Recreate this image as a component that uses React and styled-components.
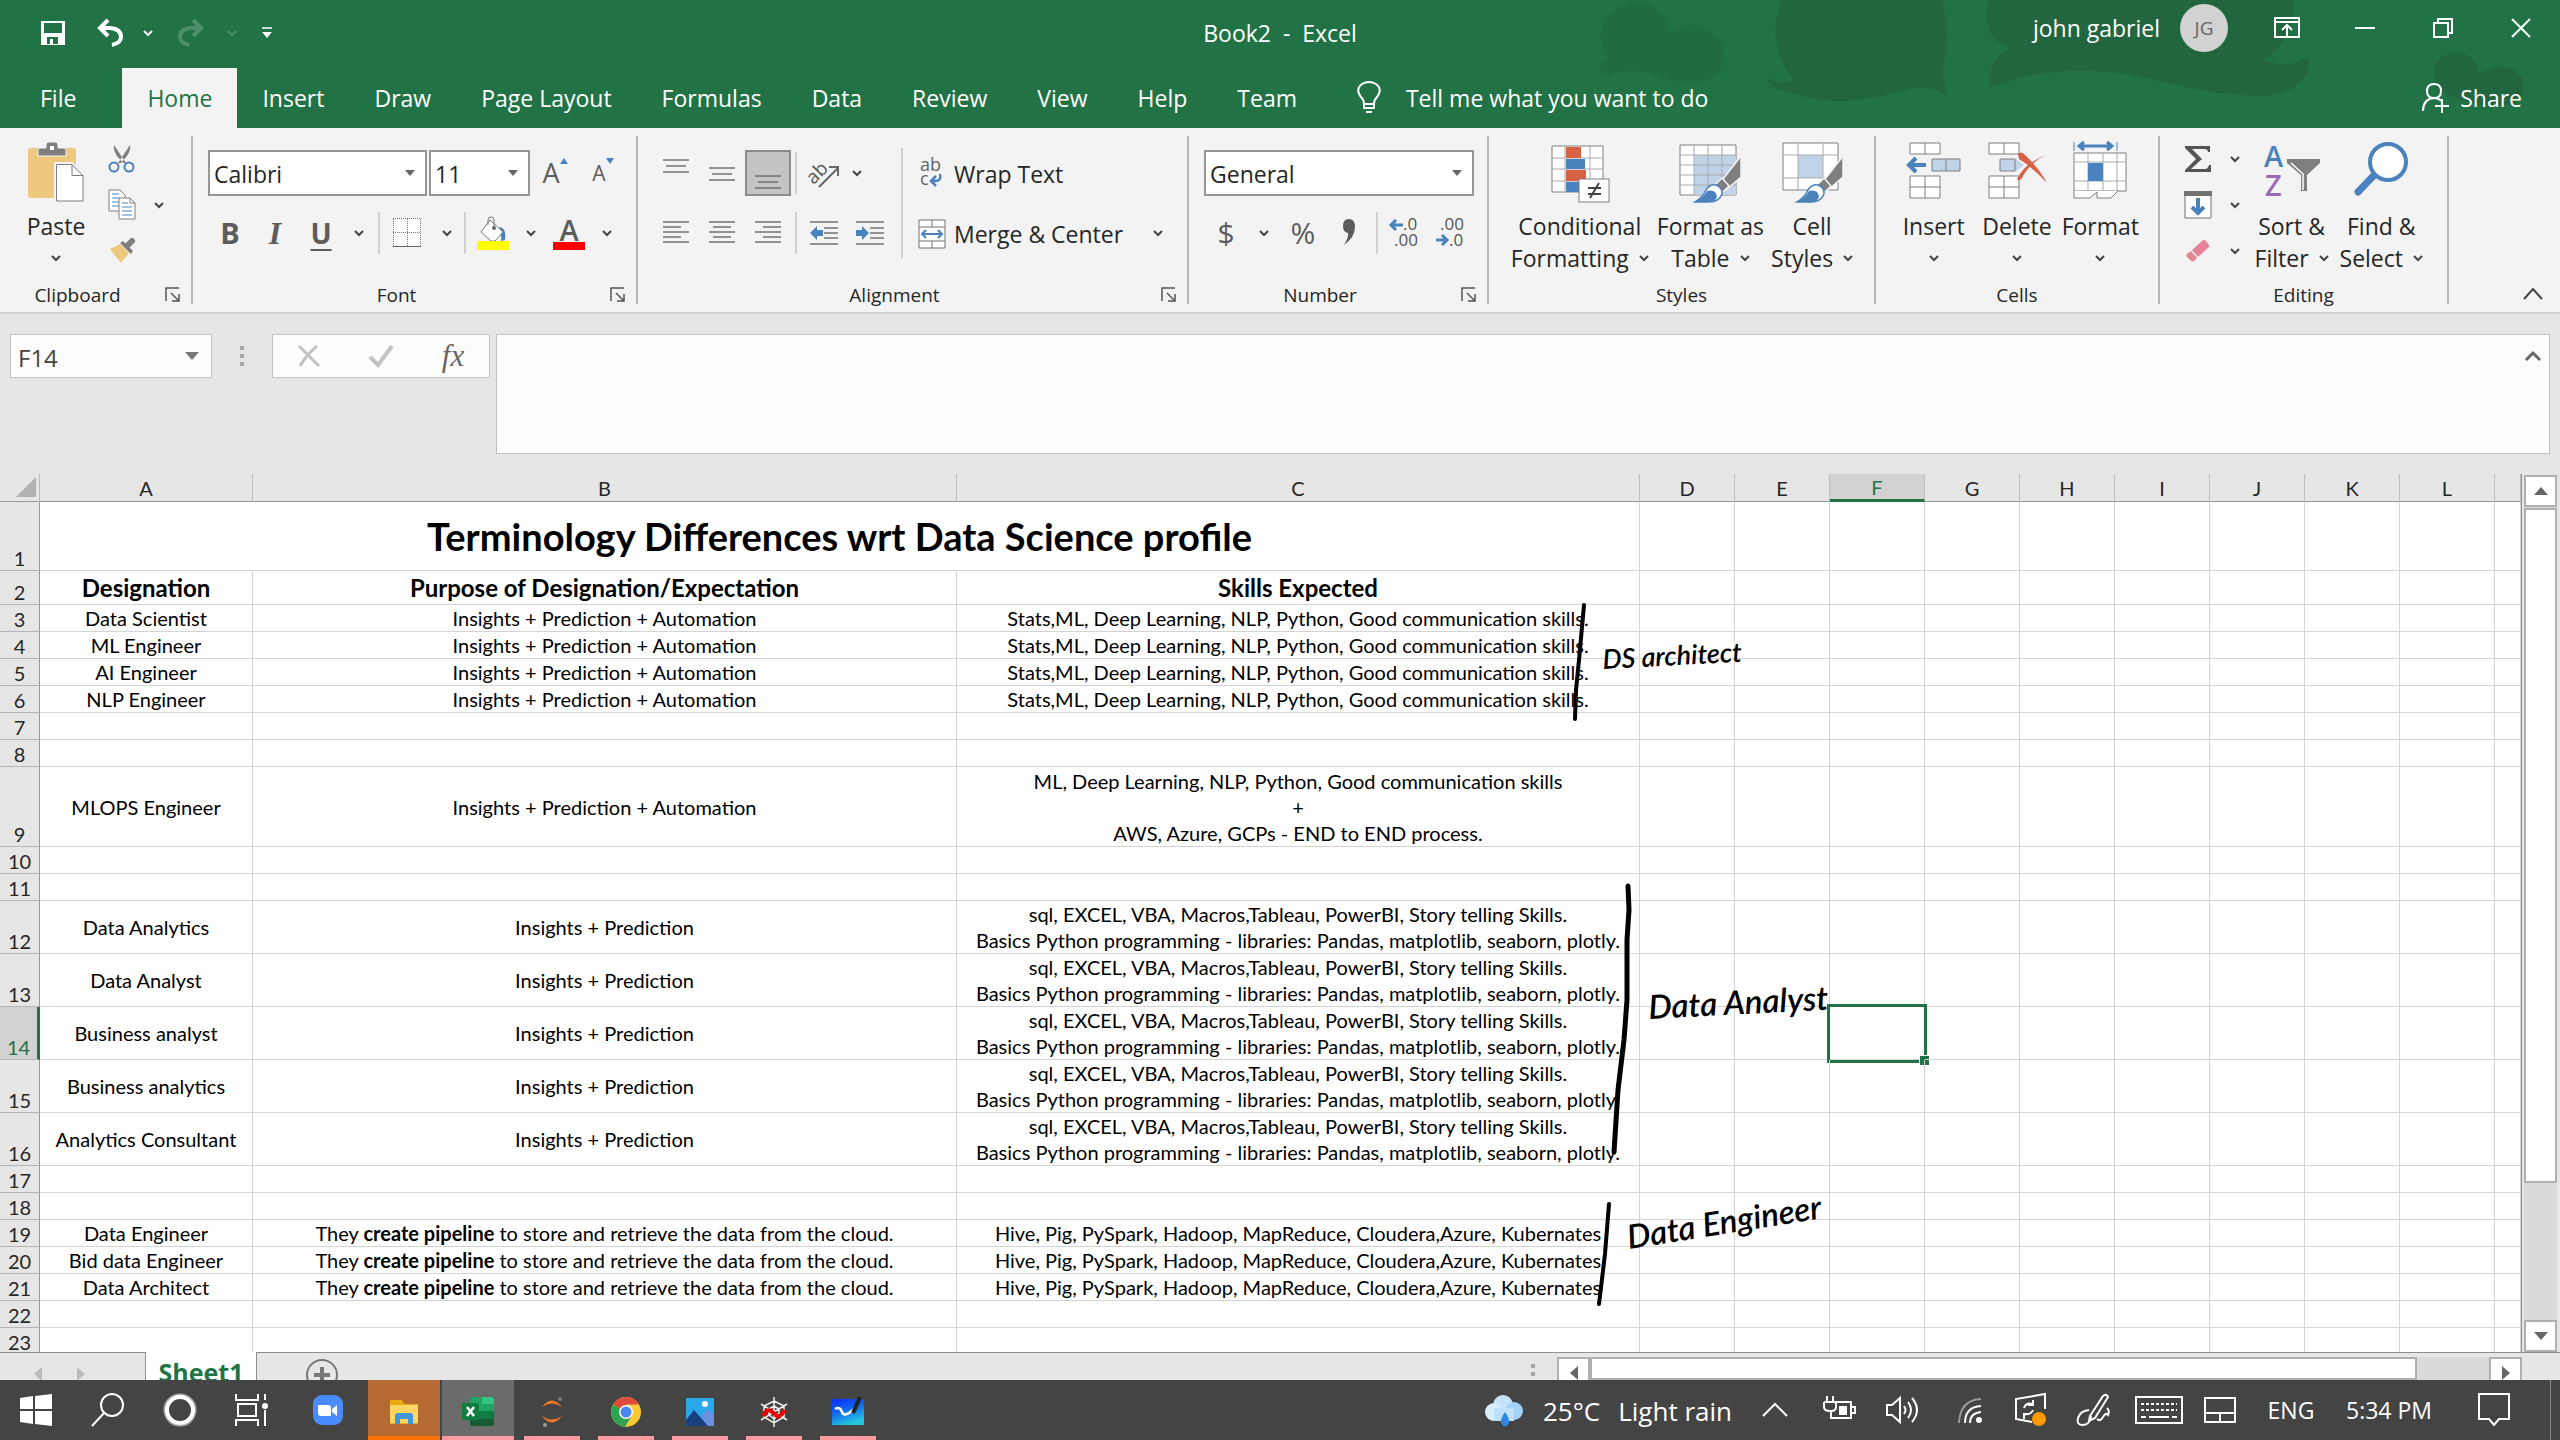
import React from "react";
import styled, { createGlobalStyle, css } from "styled-components";

const UI = `"Open Sans", "Noto Sans", sans-serif`;
const CELL = `Lato, "Open Sans", sans-serif`;
const GREEN = "#217346";
const GREY = "#7f7f7f";
const BLUE = "#4a82bd";

const Global = createGlobalStyle`
  *, *::before, *::after { box-sizing: border-box; }
  body { margin: 0; background: #e6e6e6; font-family: ${UI}; color: #262626; }
  button, input, select, textarea { font: inherit; color: inherit; margin: 0; padding: 0; border: 0; background: none; border-radius: 0; }
  button { display: inline-flex; align-items: center; justify-content: center; white-space: nowrap; }
  svg { display: block; flex: none; overflow: visible; }
`;

const Window = styled.div`
  display: flex;
  flex-direction: column;
  height: 100vh;
  overflow: hidden;
  font-size: 23px;
`;

/* ---------- title and tabs ---------- */
const Header = styled.header`
  position: relative;
  flex: none;
  background: ${GREEN};
  color: #fff;
`;
const Doodles = styled.svg`
  position: absolute;
  top: 0;
  right: 0;
`;
const TitleBar = styled.div`
  position: relative;
  display: grid;
  grid-template-columns: 1fr auto 1fr;
  align-items: center;
  height: 68px;
  padding-bottom: 2px;
`;
const QuickAccess = styled.div`
  display: flex;
  align-items: center;
  padding-left: 32px;
`;
const QuickButton = styled.button`
  width: ${(p) => p.$w}px;
  height: 40px;
  opacity: ${(p) => (p.$dim ? 0.2 : 1)};
`;
const DocTitle = styled.h1`
  margin: 0;
  font-size: 23px;
  font-weight: 400;
  white-space: pre;
`;
const TitleRight = styled.div`
  display: flex;
  justify-content: flex-end;
  align-items: center;
  align-self: start;
  height: 56px;
`;
const Avatar = styled.span`
  display: grid;
  place-items: center;
  width: 48px;
  height: 48px;
  margin: 0 20px;
  border-radius: 50%;
  background: #d2d2d2;
  color: #666;
  font-size: 19px;
`;
const CaptionButton = styled.button`
  width: 78px;
  height: 56px;
`;
const TabBar = styled.nav`
  position: relative;
  display: flex;
  height: 60px;
`;
const Tab = styled.button`
  height: 60px;
  padding: 0 ${(p) => (p.$file ? 46 : 25)}px 0 ${(p) => (p.$file ? 40 : 25)}px;
  background: ${(p) => (p.$active ? "#f3f3f3" : "transparent")};
  color: ${(p) => (p.$active ? GREEN : "#fff")};
`;
const TellMe = styled.button`
  gap: 24px;
  margin-left: 34px;
`;
const Share = styled.button`
  gap: 8px;
  margin-left: auto;
  padding-right: 38px;
`;

/* ---------- ribbon ---------- */
const Ribbon = styled.div`
  display: flex;
  flex: none;
  height: 186px;
  padding: 8px 0;
  background: #f3f3f3;
  border-bottom: 2px solid #d0d0d0;
`;
const Group = styled.section`
  display: flex;
  flex-direction: column;
  flex: none;
  width: ${(p) => p.$w}px;
  border-right: 2px solid #b5b5b5;
`;
const GroupBody = styled.div`
  display: flex;
  flex: 1;
  padding: 0 ${(p) => p.$pad || 0}px;
`;
const GroupFoot = styled.div`
  display: flex;
  align-items: center;
  height: 26px;
  padding-top: 8px;
  font-size: 19px;
  line-height: 18px;
  text-align: center;
`;
const GroupName = styled.span`
  flex: 1;
`;
const Launcher = styled.button`
  width: 36px;
  height: 18px;
`;
const Big = styled.button`
  flex-direction: column;
  justify-content: flex-start;
  width: ${(p) => p.$w}px;
  height: 138px;
  padding-top: 6px;
  line-height: 32px;
`;
const BigLine = styled.span`
  display: flex;
  align-items: center;
  justify-content: center;
  gap: 10px;
  height: 32px;
`;
const SmallColumn = styled.div`
  display: flex;
  flex-direction: column;
  width: ${(p) => p.$w}px;
`;
const Small = styled.button`
  gap: 18px;
  justify-content: flex-start;
  height: 46px;
`;
const Rows = styled.div`
  display: flex;
  flex-direction: column;
  gap: 14px;
  flex: ${(p) => (p.$grow ? 1 : "none")};
  padding-top: 14px;
`;
const Row = styled.div`
  display: flex;
  align-items: center;
  gap: ${(p) => p.$gap || 0}px;
  height: 46px;
`;
const Tool = styled.button`
  width: ${(p) => p.$w || 46}px;
  height: 46px;
  color: #5c5c5c;
  ${(p) => p.$on && css`background: #c5c5c5; border: 2px solid #8a8a8a;`}
`;
const Glyph = styled.span`
  font-size: ${(p) => p.$size || 30}px;
  line-height: 36px;
  font-weight: ${(p) => (p.$bold ? 700 : 400)};
  font-style: ${(p) => (p.$italic ? "italic" : "normal")};
  font-family: ${(p) => (p.$serif ? `"Liberation Serif", serif` : UI)};
  text-decoration: ${(p) => (p.$under ? "underline" : "none")};
  text-decoration-thickness: 2px;
  text-underline-offset: 5px;
`;
const ColorStack = styled.span`
  display: flex;
  flex-direction: column;
  align-items: center;
  border-bottom: 8px solid ${(p) => p.$c};
  width: 32px;
  height: 34px;
  font-size: 29px;
  font-weight: 600;
  line-height: 28px;
`;
const Sep = styled.span`
  flex: none;
  width: 2px;
  height: ${(p) => p.$h || 42}px;
  margin: ${(p) => p.$m || "0"};
  background: #d0d0d0;
`;
const ComboBox = styled.span`
  display: grid;
  align-items: center;
  flex: ${(p) => (p.$w ? "none" : 1)};
  width: ${(p) => (p.$w ? p.$w + "px" : "auto")};
  height: 46px;
  background: #fff;
  border: 2px solid #969696;
  & > * { grid-area: 1 / 1; }
  & > svg { justify-self: end; margin-right: 10px; pointer-events: none; }
`;
const ComboSelect = styled.select`
  appearance: none;
  width: 100%;
  height: 100%;
  padding: 2px 0 0 4px;
`;
const TextTool = styled.button`
  gap: 8px;
  height: 46px;
  padding-top: 2px;
`;
const Collapse = styled.button`
  align-self: flex-end;
  margin-left: auto;
  padding: 0 16px;
  height: 24px;
`;

/* ---------- formula bar ---------- */
const FormulaBar = styled.div`
  display: flex;
  align-items: flex-start;
  flex: none;
  height: 160px;
  padding: 20px 10px;
`;
const Box = styled.div`
  display: flex;
  align-items: center;
  flex: none;
  width: ${(p) => p.$w}px;
  height: 44px;
  background: #fdfdfd;
  border: 1px solid #c0c0c0;
`;
const NameInput = styled.input`
  flex: 1;
  min-width: 0;
  height: 42px;
  padding: 2px 0 0 7px;
  color: #444;
  font-size: 24px;
`;
const NameArrow = styled.button`
  width: 38px;
  height: 42px;
`;
const Dots = styled.span`
  display: flex;
  flex-direction: column;
  gap: 4px;
  padding: ${(p) => p.$p};
  &::before, &::after { content: ""; width: 4px; height: 4px; background: #a6a6a6; }
  & > i { width: 4px; height: 4px; background: #a6a6a6; }
`;
const FxButton = styled.button`
  flex: 1;
  height: 42px;
  color: #666;
`;
const FormulaBox = styled.div`
  display: flex;
  align-items: flex-start;
  flex: 1;
  height: 120px;
  margin-left: 6px;
  background: #fdfdfd;
  border: 1px solid #c0c0c0;
`;
const FormulaText = styled.textarea`
  flex: 1;
  height: 118px;
  resize: none;
`;
const Expand = styled.button`
  width: 32px;
  height: 42px;
`;

/* ---------- sheet ---------- */
const SheetArea = styled.main`
  display: flex;
  flex: 1;
  min-height: 0;
`;
const Canvas = styled.div`
  position: relative;
  flex: 1;
  min-width: 0;
  overflow: hidden;
  background: #fff;
  border-right: 1px solid #8f8f8f;
`;
const Grid = styled.table`
  width: 100%;
  table-layout: fixed;
  border-collapse: separate;
  border-spacing: 0;
  font-family: ${CELL};
  font-size: 20px;
  line-height: 26px;
  color: #000;
`;
const ColHead = styled.th`
  height: 28px;
  padding: 0;
  font-weight: 400;
  font-size: 20px;
  line-height: 24px;
  background: ${(p) => (p.$on ? "#d2d2d2" : "#e6e6e6")};
  color: ${(p) => (p.$on ? GREEN : "#262626")};
  border-right: 1px solid #bdbdbd;
  border-bottom: ${(p) => (p.$on ? `3px solid ${GREEN}` : "1px solid #999")};
`;
const CornerHead = styled(ColHead)`
  & > svg { margin: 0 3px 2px auto; }
`;
const RowHead = styled.th`
  padding: 0;
  font-weight: 400;
  font-size: 20px;
  line-height: 24px;
  vertical-align: bottom;
  background: ${(p) => (p.$on ? "#d2d2d2" : "#e6e6e6")};
  color: ${(p) => (p.$on ? GREEN : "#262626")};
  border-right: ${(p) => (p.$on ? `3px solid ${GREEN}` : "1px solid #999")};
  border-bottom: 1px solid #b5b5b5;
`;
const SheetRow = styled.tr`
  height: ${(p) => p.$h}px;
`;
const Cell = styled.td`
  position: relative;
  padding: 0;
  text-align: center;
  vertical-align: middle;
  white-space: pre;
  border-right: 1px solid #d4d4d4;
  border-bottom: 1px solid #d4d4d4;
  font-size: ${(p) => (p.$kind === "title" ? 38 : p.$kind === "head" ? 24 : 20)}px;
  font-weight: ${(p) => (p.$kind ? 700 : 400)};
`;
const Selection = styled.span`
  position: absolute;
  inset: -3px -3px -4px -3px;
  border: 3px solid ${GREEN};
  &::after {
    content: "";
    position: absolute;
    right: -5px;
    bottom: -5px;
    width: 10px;
    height: 10px;
    background: ${GREEN};
    border: solid #fff;
    border-width: 1px 0 0 1px;
  }
`;
const Ink = styled.svg`
  position: absolute;
  top: 0;
  left: 0;
  pointer-events: none;
  font-family: ${CELL};
  font-style: italic;
  font-weight: 600;
`;
const VScroll = styled.div`
  display: flex;
  flex-direction: column;
  width: 38px;
  padding: 1px 3px 0 2px;
`;
const ScrollButton = styled.button`
  flex: none;
  width: ${(p) => p.$w || 33}px;
  height: 32px;
  background: #fff;
  border: 2px solid #b0b0b0;
`;
const Track = styled.div`
  display: flex;
  flex-direction: ${(p) => (p.$row ? "row" : "column")};
  flex: 1;
  background: #dadada;
`;
const Thumb = styled.div`
  flex: 0 0 ${(p) => p.$len};
  margin: ${(p) => p.$m || "0"};
  background: #fff;
  border: 2px solid #b0b0b0;
`;
const SheetTabs = styled.div`
  display: flex;
  flex: none;
  height: 28px;
  overflow: hidden;
  align-items: flex-start;
  background: linear-gradient(#8f8f8f 1px, #e6e6e6 1px);
`;
const TabNav = styled.div`
  display: flex;
  gap: 35px;
  width: 145px;
  height: 28px;
  padding: 14px 0 0 34px;
`;
const NavButton = styled.button`
  height: 16px;
`;
const SheetTab = styled.button`
  width: 112px;
  height: 40px;
  background: #fff;
  border: solid #8f8f8f;
  border-width: 0 1px;
  color: ${GREEN};
  font-size: 25px;
  font-weight: 700;
`;
const TabFill = styled.div`
  flex: 1;
  height: 28px;
  padding: 6px 0 0 48px;
`;
const HScroll = styled.div`
  display: flex;
  width: 38%;
  max-width: 965px;
  height: 28px;
  padding-top: 5px;
  margin-right: 38px;
`;

/* ---------- taskbar ---------- */
const Taskbar = styled.footer`
  display: flex;
  align-items: center;
  flex: none;
  height: 60px;
  padding-right: 9px;
  background: #444;
  color: #fff;
`;
const TaskButton = styled.button`
  width: ${(p) => p.$w || 72}px;
  height: 60px;
  margin-right: ${(p) => (p.$app ? 2 : 0)}px;
  background: ${(p) => p.$bg || "transparent"};
`;
const RunningButton = styled(TaskButton)`
  padding-top: 4px;
  &::after {
    content: "";
    align-self: flex-end;
    width: ${(p) => (p.$bg ? 72 : 56)}px;
    height: 4px;
    margin-left: -${(p) => (p.$bg ? 72 : 56)}px;
    background: ${(p) => p.$line || "#ff9aa0"};
  }
  & > svg { margin: 0 ${(p) => (p.$bg ? 20 : 12)}px; }
`;
const Tray = styled.div`
  display: flex;
  align-items: center;
  margin-left: auto;
`;
const TrayButton = styled.button`
  width: ${(p) => (p.$w ? p.$w + "px" : "auto")};
  height: 60px;
`;
const Weather = styled.button`
  gap: 18px;
  height: 60px;
  padding-top: 2px;
  font-size: 26px;
`;
const DesktopEdge = styled.span`
  width: 1px;
  height: 60px;
  background: #8a8a8a;
`;

/* ---------- drawings ---------- */
const Svg = ({ w, h, children, ...rest }) => (
  <svg width={w} height={h} viewBox={`0 0 ${w} ${h}`} fill="none" aria-hidden="true" {...rest}>
    {children}
  </svg>
);
const Chev = ({ c = "#444" }) => (
  <Svg w={10} h={8}><path d="M1 2l4 4 4-4" stroke={c} strokeWidth="2" /></Svg>
);
const Down = ({ c = "#666", w = 10 }) => (
  <Svg w={w} h={6}><path d={`M0 0h${w}l-${w / 2} 6z`} fill={c} /></Svg>
);
const Lines = ({ rows, w = 28, h = 34, x = 0 }) => (
  <Svg w={w} h={h}>
    <path stroke="#737373" strokeWidth="1.500" d={rows.map(([y, a, b]) => `M${a + x} ${y}H${b + x}`).join("")} />
  </Svg>
);
const LauncherIcon = () => (
  <Svg w={16} h={16}><path d="M1 14V1h13M6 6l8 8M14 7v7H7" stroke="#555" strokeWidth="1.500" /></Svg>
);
const PasteIcon = () => (
  <Svg w={60} h={68}>
    <rect x="2" y="6" width="48" height="50" rx="3" fill="#edc87e" />
    <path d="M12 14V8q0-2 2-2h6V3q0-3 3-3h6q3 0 3 3v3h6q2 0 2 2v6z" fill="#7f7f7f" stroke="#f3f3f3" strokeWidth="1" />
    <rect x="24" y="4" width="4" height="4" fill="#fff" />
    <path d="M30 22h16l11 11v26H30z" fill="#fff" stroke="#f3f3f3" strokeWidth="4" />
    <path d="M30.500 22.500H46l11 11V59H30.500zM46 22.500v11h11" fill="#fff" stroke={GREY} />
  </Svg>
);
const CutIcon = () => (
  <Svg w={28} h={30}>
    <path d="M6 1l12 18-3 0L9 12Q5 6 6 1zM22 1L10 19h3l6-7q4-6 3-11z" fill={GREY} />
    <circle cx="6" cy="23" r="4.500" stroke={BLUE} strokeWidth="2" />
    <circle cx="21" cy="23" r="4.500" stroke={BLUE} strokeWidth="2" />
  </Svg>
);
const CopyIcon = () => (
  <Svg w={28} h={32}>
    <path d="M1 1h11l5 5v16H1z" fill="#fff" stroke={GREY} />
    <path d="M4 5h7M4 9h8M4 13h8M4 17h8" stroke={BLUE} />
    <path d="M11 9h11l5 5v16H11z" fill="#fff" stroke={GREY} />
    <path d="M22 9v5h5" stroke={GREY} />
    <path d="M14 14h6M14 18h10M14 22h10M14 26h10" stroke={BLUE} />
  </Svg>
);
const BrushIcon = () => (
  <Svg w={28} h={26}>
    <path d="M2 11l10-5 9 9-8 10z" fill="#edc87e" />
    <path d="M12 5l3-2 10 10-2 3z" fill={GREY} />
    <path d="M19 8l5-5" stroke={GREY} strokeWidth="6" strokeLinecap="round" />
  </Svg>
);
const BordersIcon = () => (
  <Svg w={30} h={30}>
    <rect x="1" y="1" width="28" height="28" fill="#fff" />
    <path d="M1 .5h28M1 14.500h28M1.500 1v27M15.500 1v27M28.500 1v27" stroke="#777" strokeDasharray="1 1" />
    <path d="M1 28.500h28" stroke="#666" />
  </Svg>
);
const BucketIcon = () => (
  <Svg w={32} h={34}>
    <path d="M23 11q7 2 5 13l-4 1q1-7-3-11z" fill={BLUE} />
    <path d="M13 4L4 16l10 9h4l8-9z" fill="#fff" stroke="#777" />
    <path d="M11 9V4q0-3 3-3t3 3v8" stroke="#777" />
    <circle cx="17" cy="12" r="2" fill="#666" />
    <rect y="25" width="32" height="9" fill="#ff0" />
  </Svg>
);
const IndentIcon = ({ out }) => (
  <Svg w={30} h={26}>
    <path d="M1 2h28M15 8h14M15 13h14M15 18h14M1 24h28" stroke="#737373" strokeWidth="1.500" />
    {out ? <path d="M1 13l7-7v4h6v6H8v4z" fill={BLUE} /> : <path d="M14 13L7 6v4H1v6h6v4z" fill={BLUE} />}
  </Svg>
);
const OrientIcon = () => (
  <Svg w={34} h={34}>
    <text x="1" y="24" transform="rotate(-45 10 20)" fontSize="19" fill="#555" fontFamily="Open Sans">ab</text>
    <path d="M12 31L31 12M31 20v-9h-9" stroke="#666" strokeWidth="2" />
  </Svg>
);
const WrapIcon = () => (
  <Svg w={28} h={34}>
    <text x="2" y="14" fontSize="18" fill="#666" fontFamily="Open Sans">ab</text>
    <text x="2" y="28" fontSize="18" fill="#666" fontFamily="Open Sans">c</text>
    <path d="M22 17q2 7-5 7h-3M18 19l-5 5 5 5" stroke={BLUE} strokeWidth="2.500" />
  </Svg>
);
const MergeIcon = () => (
  <Svg w={28} h={30}>
    <path d="M1 1h26v28H1zM1 8h26M1 22h26M14 1v7M14 22v7" fill="#fff" stroke="#737373" />
    <path d="M4 15h20M8 11l-4 4 4 4M20 11l4 4-4 4" stroke={BLUE} strokeWidth="2" />
  </Svg>
);
const DecimalIcon = ({ more }) => (
  <Svg w={34} h={34}>
    <g fontSize="17" fill="#555" fontFamily="Open Sans">
      <text x={more ? 15 : 6} y="14">{more ? ".0" : ".00"}</text>
      <text x={more ? 6 : 15} y="30">{more ? ".00" : ".0"}</text>
    </g>
    {more
      ? <path d="M15 9H4M8 4L3 9l5 5" stroke={BLUE} strokeWidth="3" />
      : <path d="M2 24h11M8 19l5 5-5 5" stroke={BLUE} strokeWidth="3" />}
  </Svg>
);
const CondIcon = () => (
  <Svg w={60} h={68}>
    <path d="M2 4h51v46H2z" fill="#fff" stroke={GREY} />
    <path d="M2 16h51M2 27h51M2 39h51M15 4v46M40 4v46" stroke="#aaa" />
    <path d="M16 5h15v11H16zM16 28h20v11H16z" fill="#d86344" />
    <path d="M16 17h19v10H16zM16 40h15v10H16z" fill={BLUE} />
    <rect x="29" y="37" width="30" height="23" fill="#fff" stroke={GREY} />
    <path d="M38 46h13M38 52h13M49 41l-9 15" stroke="#444" strokeWidth="2" />
  </Svg>
);
const StyleBrush = () => (
  <g>
    <path d="M63 14v21L48 48l-6-7z" fill={GREY} stroke="#f3f3f3" strokeWidth="1.500" />
    <path d="M44 36l7 8-6 6-8-7z" fill={GREY} stroke="#f3f3f3" strokeWidth="1.500" />
    <path d="M17 60Q25 55 28 48q4-6 10-5 7 3 6 9-3 8-13 8z" fill="#fff" stroke={BLUE} strokeWidth="1.500" />
    <path d="M17 60q9-5 12-11 9-2 10 6-2 5-9 5z" fill={BLUE} />
  </g>
);
const FormatTableIcon = () => (
  <Svg w={64} h={68}>
    <path d="M2 3h56v50H2z" fill="#fff" stroke={GREY} />
    <path d="M16 13h42v40H16z" fill="#c0d3e8" />
    <path d="M2 13h56M2 23h56M2 33h56M2 43h56M16 3v50M30 3v50M44 3v50" stroke="#aaa" />
    <StyleBrush />
  </Svg>
);
const CellStylesIcon = () => (
  <Svg w={64} h={68}>
    <path d="M3 1h55v47H3z" fill="#fff" stroke={GREY} />
    <path d="M18 13h25v23H18z" fill="#c0d3e8" />
    <path d="M3 13h55M3 36h55M18 1v47M43 1v47" stroke="#aaa" />
    <StyleBrush />
  </Svg>
);
const CellBlocks = () => (
  <path d="M4 1h30v11H4zM19 1v11M4 34h30v22H4zM19 34v22M4 45h30" fill="#fff" stroke={GREY} />
);
const InsertIcon = () => (
  <Svg w={56} h={68}>
    <CellBlocks />
    <path d="M26 17h28v12H26zM40 17v12" fill="#c0d3e8" stroke={GREY} />
    <path d="M20 23H3M10 16l-7 7 7 7" stroke={BLUE} strokeWidth="4" />
  </Svg>
);
const DeleteIcon = () => (
  <Svg w={64} h={68}>
    <CellBlocks />
    <path d="M15 17h16l8 6-8 6H15z" fill="#c0d3e8" />
    <path d="M30 17H15v12h15M30 17v12" stroke={GREY} />
    <path d="M35 14q13 9 25 26" stroke="#f3f3f3" strokeWidth="8" />
    <path d="M33 12q3-3 6 0 14 13 22 27v1Q47 25 34 17zM61 13Q45 20 37 36q-3 4-5 1Q40 21 61 13z" fill="#d86344" />
  </Svg>
);
const FormatIcon = () => (
  <Svg w={56} h={68}>
    <path d="M2 0v9M45 0v9" stroke={BLUE} />
    <path d="M7 4h33M12 0L7 4l5 4M35 0l5 4-5 4" stroke={BLUE} strokeWidth="3" />
    <path d="M2 11h52v38H2z" fill="#fff" stroke={GREY} />
    <path d="M2 20h52M2 39h52M16 11v38M31 11v38M45 11v38" stroke="#aaa" />
    <path d="M16 21h15v18H16z" fill={BLUE} />
    <path d="M2 49v7h16l7-6v6h14l7-7" fill="#fff" stroke={GREY} />
  </Svg>
);
const FillIcon = () => (
  <Svg w={28} h={28}>
    <path d="M1 1h26v26H1z" fill="#fff" stroke="#737373" />
    <path d="M0 0h28v5H0z" fill="#737373" />
    <path d="M14 7v15M8 16l6 6 6-6" stroke={BLUE} strokeWidth="4" />
  </Svg>
);
const EraserIcon = () => (
  <Svg w={28} h={26}>
    <path d="M8 12L18 3q2-2 4 0l3 4q1 1-1 3L14 19z" fill="#e68497" />
    <path d="M7 13l6 7-3 3q-2 1-4-1l-3-3q-1-2 0-3z" fill="#e68497" />
  </Svg>
);
const SortIcon = () => (
  <Svg w={60} h={68}>
    <g fontFamily="Open Sans" fontSize="29" fontWeight="600">
      <text x="2" y="25" fill={BLUE}>A</text>
      <text x="3" y="54" fill="#9a69b8">Z</text>
    </g>
    <path d="M25 17h33v4L45 33v16h-6V33L25 21z" fill={GREY} />
    <path d="M29 21l12 11v16" stroke="#fff" strokeWidth="1.500" />
  </Svg>
);
const FindIcon = () => (
  <Svg w={60} h={68}>
    <path d="M7 50l20-21" stroke={BLUE} strokeWidth="7" strokeLinecap="round" />
    <circle cx="37" cy="20" r="18" fill="#fff" stroke={BLUE} strokeWidth="4" />
  </Svg>
);

/* ---------- data ---------- */
const COLS = "ABCDEFGHIJKL".split("");
const COL_W = { A: 213, B: 704, C: 683 };
const ipa = "Insights + Prediction + Automation";
const ip = "Insights + Prediction";
const dsSkills = "Stats,ML, Deep Learning, NLP, Python, Good communication skills.";
const daSkills = "sql, EXCEL, VBA, Macros,Tableau, PowerBI, Story telling Skills.\nBasics Python programming - libraries: Pandas, matplotlib, seaborn, plotly.";
const pipeline = <>They <b>create pipeline</b> to store and retrieve the data from the cloud.</>;
const deSkills = "Hive, Pig, PySpark, Hadoop, MapReduce, Cloudera,Azure, Kubernates";
const DATA = {
  3: ["Data Scientist", ipa, dsSkills],
  4: ["ML Engineer", ipa, dsSkills],
  5: ["AI Engineer", ipa, dsSkills],
  6: ["NLP Engineer", ipa, dsSkills],
  9: ["MLOPS Engineer", ipa, "ML, Deep Learning, NLP, Python, Good communication skills\n+\nAWS, Azure, GCPs - END to END process."],
  12: ["Data Analytics", ip, daSkills],
  13: ["Data Analyst", ip, daSkills],
  14: ["Business analyst", ip, daSkills],
  15: ["Business analytics", ip, daSkills],
  16: ["Analytics Consultant", ip, daSkills],
  19: ["Data Engineer", pipeline, deSkills],
  20: ["Bid data Engineer", pipeline, deSkills],
  21: ["Data Architect", pipeline, deSkills],
};
const HEADS = ["Designation", "Purpose of Designation/Expectation", "Skills Expected"];
const rowHeight = (n) => (n === 1 ? 69 : n === 2 ? 34 : n === 9 ? 80 : n >= 12 && n <= 16 ? 53 : 27);

const BigButton = ({ w, icon, lines, chev = true }) => (
  <Big $w={w}>
    {icon}
    {lines.map((l, i) => (
      <BigLine key={i}>{l}{chev && i === lines.length - 1 && <Chev />}</BigLine>
    ))}
  </Big>
);
const GroupEnd = ({ name, launch }) => (
  <GroupFoot>
    <GroupName>{name}</GroupName>
    {launch && <Launcher aria-label={`${name} settings`}><LauncherIcon /></Launcher>}
  </GroupFoot>
);
const Combo = ({ w, label, value }) => (
  <ComboBox $w={w}>
    <ComboSelect aria-label={label} defaultValue={value}><option>{value}</option></ComboSelect>
    <Down />
  </ComboBox>
);

function TopBar() {
  return (
    <Header>
      <Doodles width="1000" height="128" viewBox="1560 0 1000 128" aria-hidden="true">
        <g fill="#22663f">
          <path opacity=".6" d="M1600 78q-2-12 8-20-18-30 8-50 24-16 46 6 6 10 8 20 20-16 38-4 24 16 12 40-20 24-72 2-30-4-48 6z" />
          <path d="M1782 0h160q10 40 0 70l5 26q-20-14-50-4-60 18-110 0-18-4-20-14 14 8 26 2-28-40-11-80z" />
          <path d="M1989 0h304q2 40-30 60 26 10 46-4 4 34-44 40-50 0-110-16-90-22-165 8-4-26 20-40-30-10-21-48z" />
          <path d="M2436 88q-8-34 22-36 20 4 20 22 30-16 44 4 6 20-10 26-40 6-76-16z" />
        </g>
      </Doodles>
      <TitleBar>
        <QuickAccess>
          <QuickButton $w={42} aria-label="Save">
            <Svg w={26} h={26}><path fillRule="evenodd" d="M1 1h24v24H1zM4 3v10h18V3zM7 17v7h3v-5h3v5h5v-7z" fill="#fff" /></Svg>
          </QuickButton>
          <QuickButton $w={74} aria-label="Undo">
            <Svg w={28} h={28}><path d="M11 1L3 9l8 8M3 9h10q11 1 11 9 0 6-9 8" stroke="#fff" strokeWidth="4" /></Svg>
          </QuickButton>
          <QuickButton $w={0} aria-label="Undo list"><Chev c="#fff" /></QuickButton>
          <QuickButton $w={84} $dim aria-label="Redo">
            <Svg w={28} h={28}><path d="M17 1l8 8-8 8M25 9H15Q4 10 4 18q0 6 9 8" stroke="#fff" strokeWidth="4" /></Svg>
          </QuickButton>
          <QuickButton $w={0} $dim aria-label="Redo list"><Chev c="#fff" /></QuickButton>
          <QuickButton $w={70} aria-label="Customize toolbar">
            <Svg w={10} h={12}><path d="M0 1h10" stroke="#fff" strokeWidth="1.500" /><path d="M0 5h10l-5 6z" fill="#fff" /></Svg>
          </QuickButton>
        </QuickAccess>
        <DocTitle>{"Book2  -  Excel"}</DocTitle>
        <TitleRight>
          <span>john gabriel</span>
          <Avatar>JG</Avatar>
          <CaptionButton aria-label="Ribbon display options">
            <Svg w={26} h={22}><path d="M1 1h24v19H1zM1 5h24M13 19V9M8 13l5-5 5 5" stroke="#fff" strokeWidth="2" /></Svg>
          </CaptionButton>
          <CaptionButton aria-label="Minimize"><Svg w={20} h={20}><path d="M0 10h20" stroke="#fff" strokeWidth="2" /></Svg></CaptionButton>
          <CaptionButton aria-label="Restore"><Svg w={20} h={22}><path d="M1 6h14v14H1zM5 5V2h14v14h-3" stroke="#fff" strokeWidth="2" /></Svg></CaptionButton>
          <CaptionButton aria-label="Close"><Svg w={20} h={20}><path d="M1 1l18 18M19 1L1 19" stroke="#fff" strokeWidth="2" /></Svg></CaptionButton>
        </TitleRight>
      </TitleBar>
      <TabBar>
        {["File", "Home", "Insert", "Draw", "Page Layout", "Formulas", "Data", "Review", "View", "Help", "Team"].map((t) => (
          <Tab key={t} $file={t === "File"} $active={t === "Home"}>{t}</Tab>
        ))}
        <TellMe>
          <Svg w={26} h={34}>
            <path d="M8 23q0-4-3-7-6-8 1-13 7-4 14 0 7 5 1 13-3 3-3 7zM8 23v4h10v-4M10 31h6" stroke="#fff" strokeWidth="2" />
          </Svg>
          Tell me what you want to do
        </TellMe>
        <Share>
          <Svg w={30} h={32}><path d="M1 29q0-12 11-13 5 0 7 3M12 2q7 0 7 7t-7 7-7-7 7-7zM20 17v14M13 24h14" stroke="#fff" strokeWidth="2" /></Svg>
          Share
        </Share>
      </TabBar>
    </Header>
  );
}

function RibbonBar() {
  const full = (ys) => ys.map((y, i) => [y, i % 2 ? 4 : 1, i % 2 ? 24 : 27]);
  return (
    <Ribbon>
      <Group $w={193}>
        <GroupBody $pad={4}>
          <Big $w={104}>
            <PasteIcon />
            <BigLine>Paste</BigLine>
            <BigLine><Chev /></BigLine>
          </Big>
          <SmallColumn $w={60}>
            <Small aria-label="Cut"><CutIcon /></Small>
            <Small aria-label="Copy"><CopyIcon /><Chev /></Small>
            <Small aria-label="Format Painter"><BrushIcon /></Small>
          </SmallColumn>
        </GroupBody>
        <GroupEnd name="Clipboard" launch />
      </Group>

      <Group $w={445}>
        <GroupBody $pad={15}>
          <Rows>
            <Row $gap={2}>
              <Combo w={219} label="Font" value="Calibri" />
              <Combo w={101} label="Font size" value="11" />
              <Tool aria-label="Increase font size"><Glyph $size={27}>A</Glyph><Svg w={8} h={30}><path d="M0 6l4-6 4 6z" fill={BLUE} /></Svg></Tool>
              <Tool aria-label="Decrease font size"><Glyph $size={21}>A</Glyph><Svg w={8} h={30}><path d="M0 0l4 6 4-6z" fill={BLUE} /></Svg></Tool>
            </Row>
            <Row>
              <Tool $w={44}><Glyph $bold $size={29}>B</Glyph></Tool>
              <Tool><Glyph $serif $italic $bold $size={32}>I</Glyph></Tool>
              <Tool><Glyph $bold $under $size={28}>U</Glyph></Tool>
              <Tool $w={30} aria-label="Underline styles"><Chev /></Tool>
              <Sep $m="0 4px" />
              <Tool aria-label="Borders" $w={46}><BordersIcon /></Tool>
              <Tool $w={34} aria-label="Border styles"><Chev /></Tool>
              <Sep $m="0 4px 0 0" />
              <Tool aria-label="Fill color"><BucketIcon /></Tool>
              <Tool $w={30} aria-label="Fill colors"><Chev /></Tool>
              <Tool><ColorStack $c="#f00">A</ColorStack></Tool>
              <Tool $w={30} aria-label="Font colors"><Chev /></Tool>
            </Row>
          </Rows>
        </GroupBody>
        <GroupEnd name="Font" launch />
      </Group>

      <Group $w={551}>
        <GroupBody $pad={15}>
          <Rows>
            <Row>
              <Tool aria-label="Top align"><Lines rows={full([6, 12, 18])} h={38} /></Tool>
              <Tool aria-label="Middle align"><Lines rows={full([12, 18, 24])} h={34} /></Tool>
              <Tool $on aria-label="Bottom align"><Lines rows={full([20, 26, 32])} /></Tool>
              <Sep $m="0 4px" />
              <Tool aria-label="Orientation"><OrientIcon /></Tool>
              <Tool $w={20} aria-label="Orientation options"><Chev /></Tool>
            </Row>
            <Row>
              <Tool aria-label="Align left"><Lines h={26} rows={[[2, 1, 27], [7, 1, 19], [12, 1, 27], [17, 1, 19], [22, 1, 27]]} /></Tool>
              <Tool aria-label="Center"><Lines h={26} rows={[[2, 1, 27], [7, 5, 23], [12, 1, 27], [17, 5, 23], [22, 1, 27]]} /></Tool>
              <Tool aria-label="Align right"><Lines h={26} rows={[[2, 1, 27], [7, 9, 27], [12, 1, 27], [17, 9, 27], [22, 1, 27]]} /></Tool>
              <Sep $m="0 4px" />
              <Tool aria-label="Decrease indent"><IndentIcon out /></Tool>
              <Tool aria-label="Increase indent"><IndentIcon /></Tool>
            </Row>
          </Rows>
          <Sep $h={110} $m="12px 15px 0 8px" />
          <Rows>
            <Row><TextTool><WrapIcon />Wrap Text</TextTool></Row>
            <Row $gap={30}><TextTool><MergeIcon />Merge &amp; Center</TextTool><Chev /></Row>
          </Rows>
        </GroupBody>
        <GroupEnd name="Alignment" launch />
      </Group>

      <Group $w={300}>
        <GroupBody $pad={15}>
          <Rows $grow>
            <Row><Combo label="Number format" value="General" /></Row>
            <Row>
              <Tool $w={44}><Glyph $size={30}>$</Glyph></Tool>
              <Tool $w={32} aria-label="Currency options"><Chev /></Tool>
              <Tool><Glyph $size={30}>%</Glyph></Tool>
              <Tool aria-label="Comma style">
                <Svg w={14} h={30}><path d="M7 1q6 0 6 8 0 10-11 18 5-8 4-12Q1 14 1 8q0-7 6-7z" fill="#5c5c5c" /></Svg>
              </Tool>
              <Sep $m="0 4px" />
              <Tool aria-label="Increase decimal"><DecimalIcon more /></Tool>
              <Tool aria-label="Decrease decimal"><DecimalIcon /></Tool>
            </Row>
          </Rows>
        </GroupBody>
        <GroupEnd name="Number" launch />
      </Group>

      <Group $w={387}>
        <GroupBody $pad={18}>
          <BigButton w={146} icon={<CondIcon />} lines={["Conditional", "Formatting"]} />
          <BigButton w={116} icon={<FormatTableIcon />} lines={["Format as", "Table"]} />
          <BigButton w={88} icon={<CellStylesIcon />} lines={["Cell", "Styles"]} />
        </GroupBody>
        <GroupEnd name="Styles" />
      </Group>

      <Group $w={284}>
        <GroupBody $pad={16}>
          <BigButton w={84} icon={<InsertIcon />} lines={["Insert", ""]} />
          <BigButton w={84} icon={<DeleteIcon />} lines={["Delete", ""]} />
          <BigButton w={84} icon={<FormatIcon />} lines={["Format", ""]} />
        </GroupBody>
        <GroupEnd name="Cells" />
      </Group>

      <Group $w={289}>
        <GroupBody $pad={24}>
          <SmallColumn $w={62}>
            <Small aria-label="AutoSum">
              <Svg w={28} h={28}><path d="M1 1h25v6h-2q0-3-4-3H8l10 10L7 24h14q3 0 4-4h2v7H1v-2l11-11L1 3z" fill="#555" /></Svg><Chev />
            </Small>
            <Small aria-label="Fill"><FillIcon /><Chev /></Small>
            <Small aria-label="Clear"><EraserIcon /><Chev /></Small>
          </SmallColumn>
          <BigButton w={100} icon={<SortIcon />} lines={["Sort &", "Filter"]} />
          <BigButton w={84} icon={<FindIcon />} lines={["Find &", "Select"]} />
        </GroupBody>
        <GroupEnd name="Editing" />
      </Group>
      <Collapse aria-label="Collapse ribbon"><Svg w={22} h={14}><path d="M2 14l9-10 9 10" stroke="#444" strokeWidth="2" /></Svg></Collapse>
    </Ribbon>
  );
}

function Formula() {
  return (
    <FormulaBar>
      <Box $w={202}>
        <NameInput aria-label="Name box" defaultValue="F14" />
        <NameArrow aria-label="Named cells"><Svg w={14} h={8}><path d="M0 0h14L7 8z" fill="#777" /></Svg></NameArrow>
      </Box>
      <Dots $p="12px 28px"><i /></Dots>
      <Box $w={218}>
        <FxButton aria-label="Cancel"><Svg w={24} h={24}><path d="M2 2l20 20M20 2Q10 10 3 22" stroke="#c3c3c3" strokeWidth="3" /></Svg></FxButton>
        <FxButton aria-label="Enter"><Svg w={26} h={24}><path d="M2 13l8 8L24 2" stroke="#c3c3c3" strokeWidth="4" /></Svg></FxButton>
        <FxButton><Glyph $serif $italic $size={31}>fx</Glyph></FxButton>
      </Box>
      <FormulaBox>
        <FormulaText aria-label="Formula" />
        <Expand aria-label="Collapse formula bar"><Svg w={18} h={12}><path d="M2 10l7-7 7 7" stroke="#666" strokeWidth="3" /></Svg></Expand>
      </FormulaBox>
    </FormulaBar>
  );
}

function Sheet() {
  return (
    <SheetArea>
      <Canvas>
        <Grid>
          <colgroup>
            <col width={40} />
            {COLS.map((c) => <col key={c} width={COL_W[c] || 95} />)}
            <col />
          </colgroup>
          <thead>
            <tr>
              <CornerHead aria-label="Select all"><Svg w={20} h={20}><path d="M20 0v20H0z" fill="#b2b2b2" /></Svg></CornerHead>
              {COLS.map((c) => <ColHead key={c} scope="col" $on={c === "F"}>{c}</ColHead>)}
              <ColHead aria-label="M" />
            </tr>
          </thead>
          <tbody>
            {Array.from({ length: 23 }, (_, i) => i + 1).map((n) => (
              <SheetRow key={n} $h={rowHeight(n)}>
                <RowHead scope="row" $on={n === 14}>{n}</RowHead>
                {n === 1
                  ? <Cell colSpan={3} $kind="title">Terminology Differences wrt Data Science profile</Cell>
                  : [0, 1, 2].map((k) => (
                    <Cell key={k} $kind={n === 2 ? "head" : undefined}>{n === 2 ? HEADS[k] : DATA[n] && DATA[n][k]}</Cell>
                  ))}
                {[..."DEFGHIJKLM"].map((c) => <Cell key={c}>{c === "F" && n === 14 && <Selection />}</Cell>)}
              </SheetRow>
            ))}
          </tbody>
        </Grid>
        <Ink width="1900" height="878" viewBox="0 474 1900 878" role="img" aria-label="Ink notes">
          <g stroke="#000" fill="none" strokeLinecap="round" strokeWidth="4">
            <path d="M1584 605L1579 660 1576 690 1575 719" />
            <path d="M1628 886l1 24-2 30 0 60-3 40-6 50-4 62" strokeWidth="5" />
            <path d="M1609 1204l-4 50-6 50" />
          </g>
          <text x="1603" y="669" fontSize="27" transform="rotate(-3 1603 669)">DS architect</text>
          <text x="1649" y="1019" fontSize="33" transform="rotate(-3 1649 1019)">Data Analyst</text>
          <text x="1629" y="1249" fontSize="33" transform="rotate(-9 1629 1249)">Data Engineer</text>
        </Ink>
      </Canvas>
      <VScroll>
        <ScrollButton aria-label="Scroll up"><Svg w={14} h={8}><path d="M7 0l7 8H0z" fill="#666" /></Svg></ScrollButton>
        <Track><Thumb $len="83%" $m="1px 0 0" /></Track>
        <ScrollButton aria-label="Scroll down"><Svg w={14} h={8}><path d="M0 0h14L7 8z" fill="#666" /></Svg></ScrollButton>
      </VScroll>
    </SheetArea>
  );
}

function BottomTabs() {
  return (
    <SheetTabs>
      <TabNav>
        <NavButton aria-label="Previous sheet"><Svg w={8} h={14}><path d="M8 0v14L0 7z" fill="#bbb" /></Svg></NavButton>
        <NavButton aria-label="Next sheet"><Svg w={8} h={14}><path d="M0 0v14l8-7z" fill="#bbb" /></Svg></NavButton>
      </TabNav>
      <SheetTab>Sheet1</SheetTab>
      <TabFill>
        <button aria-label="New sheet">
          <Svg w={34} h={34}><circle cx="17" cy="17" r="15" stroke="#777" strokeWidth="2" /><path d="M17 9v16M9 17h16" stroke="#777" strokeWidth="4" /></Svg>
        </button>
      </TabFill>
      <Dots $p="12px 22px"><i /></Dots>
      <HScroll>
        <ScrollButton aria-label="Scroll left"><Svg w={8} h={14}><path d="M8 0v14L0 7z" fill="#666" /></Svg></ScrollButton>
        <Track $row><Thumb $len="92%" /></Track>
        <ScrollButton aria-label="Scroll right"><Svg w={8} h={14}><path d="M0 0v14l8-7z" fill="#666" /></Svg></ScrollButton>
      </HScroll>
    </SheetTabs>
  );
}

function BottomBar() {
  return (
    <Taskbar>
      <TaskButton aria-label="Start"><Svg w={32} h={32}><path d="M0 4l13-2v13H0zM15 2l17-2v15H15zM0 17h13v13L0 28zM15 17h17v15l-17-2z" fill="#fff" /></Svg></TaskButton>
      <TaskButton aria-label="Search"><Svg w={34} h={34}><circle cx="21" cy="12" r="11" stroke="#fff" strokeWidth="2" /><path d="M13 20L1 33" stroke="#fff" strokeWidth="2" /></Svg></TaskButton>
      <TaskButton aria-label="Cortana"><Svg w={34} h={34}><circle cx="17" cy="17" r="14" stroke="#aaa" strokeWidth="5" /><circle cx="17" cy="17" r="13" stroke="#fff" strokeWidth="4" /></Svg></TaskButton>
      <TaskButton aria-label="Task view"><Svg w={34} h={32}><path d="M1 0v6h22V0M3 10h18v12H3zM1 32v-6h22v6M30 0v6M30 16v16" stroke="#fff" strokeWidth="2" /><circle cx="30" cy="12" r="3" fill="#fff" /></Svg></TaskButton>
      <TaskButton $w={80} aria-label="Video call">
        <Svg w={32} h={32}><rect x="1" y="1" width="30" height="30" rx="9" fill="#4a8cff" /><path d="M6 11h10q3 0 3 3v8H9q-3 0-3-3zM20 15l5-4v11l-5-4z" fill="#fff" /></Svg>
      </TaskButton>
      <RunningButton $app $bg="#b46a32" $line="#ff7100" aria-label="File Explorer">
        <Svg w={32} h={32}><path d="M2 4h12l2 4h14v20H2z" fill="#e8a913" /><path d="M2 9h28v18H2z" fill="#fcd462" /><path d="M7 28v-8q0-3 3-3h12q3 0 3 3v8h-5v-5h-8v5z" fill="#3f96d8" /></Svg>
      </RunningButton>
      <RunningButton $app $bg="#6b6b6b" aria-label="Excel">
        <Svg w={32} h={32}><rect x="8" y="1" width="24" height="29" rx="2" fill="#185c37" /><path d="M8 3q0-2 2-2h10v14H8z" fill="#21a366" /><path d="M20 1h10q2 0 2 2v5H20z" fill="#33c481" /><path d="M20 8h12v7H20z" fill="#21a366" /><path d="M8 15h12v8H8z" fill="#107c41" /><path d="M20 15h12v8H20z" fill="#107c41" /><rect x="0" y="7" width="17" height="17" rx="1" fill="#107c41" /><path d="M5 11l7 9M12 11l-7 9" stroke="#fff" strokeWidth="2.500" /></Svg>
      </RunningButton>
      <RunningButton $app aria-label="Jupyter">
        <Svg w={32} h={32}><path d="M6 11Q16-2 26 11 16 4 6 11zM6 20q10 13 20 0-10 7-20 0z" fill="#f37726" /><circle cx="24" cy="3" r="2" fill="#777" /><circle cx="9" cy="29" r="2" fill="#999" /></Svg>
      </RunningButton>
      <RunningButton $app aria-label="Chrome">
        <Svg w={32} h={32}><circle cx="16" cy="16" r="15" fill="#fbc934" /><path d="M16 16L3 8.500A15 15 0 0 1 29 8.500H16z" fill="#dd4b3e" /><path d="M3 8.500A15 15 0 0 0 15 31l7-12-6-3z" fill="#2fa352" /><circle cx="16" cy="16" r="7" fill="#fff" /><circle cx="16" cy="16" r="5.500" fill="#4a86ee" /></Svg>
      </RunningButton>
      <RunningButton $app aria-label="Photos">
        <Svg w={32} h={32}><rect x="2" y="2" width="28" height="28" rx="1" fill="#29a8ea" /><path d="M14 24l10-11 6 6v11H14z" fill="#6b8fe0" /><path d="M2 24l8-10 14 16H2z" fill="#17407e" /><circle cx="21" cy="8" r="3" fill="#fff" /></Svg>
      </RunningButton>
      <RunningButton $app aria-label="Spyder">
        <Svg w={32} h={32}><path d="M16 1v30M3 8l26 16M29 8L3 24M16 5l10 5v11l-10 6-10-6V10zM16 10l5 3v6l-5 4-5-4v-6z" stroke="#eee" strokeWidth="1.500" /><path d="M5 20q4-8 8-5t6 5 8-6" stroke="#e00" strokeWidth="4" /></Svg>
      </RunningButton>
      <RunningButton $app aria-label="Whiteboard">
        <Svg w={32} h={34}><defs><linearGradient id="wb" x2="0.400" y2="1"><stop stopColor="#0a2cff" /><stop offset=".5" stopColor="#1166ee" /><stop offset="1" stopColor="#23c5e0" /></linearGradient></defs><rect x="0" y="4" width="32" height="26" fill="url(#wb)" /><path d="M3 14q5-3 7 3t12-3" stroke="#fff" strokeWidth="2.500" /><path d="M21 18L28 2" stroke="#222" strokeWidth="4" /></Svg>
      </RunningButton>
      <Tray>
        <Weather>
          <Svg w={42} h={34}><circle cx="20" cy="11" r="10" fill="#c5e4fb" /><circle cx="11" cy="18" r="9" fill="#d8eefd" /><circle cx="31" cy="17" r="9" fill="#a5d3f8" /><path d="M11 14h20v13H11z" fill="#bfe0fa" /><path d="M22 18q5 7 4 11-4 7-8 0-1-4 4-11z" fill="#2f87dd" /></Svg>
          <span>25°C</span><span>Light rain</span>
        </Weather>
        <TrayButton $w={86} aria-label="Hidden icons"><Svg w={28} h={18}><path d="M2 15L14 3l12 12" stroke="#fff" strokeWidth="2" /></Svg></TrayButton>
        <TrayButton $w={42} aria-label="Battery"><Svg w={32} h={28}><path d="M11 6h17v16H13M29 11h3v6h-3M4 0v6M10 0v6M1 6h12v5q0 4-5 4v7h5M7 15q-6 0-6-4V6" stroke="#fff" strokeWidth="2" /><path d="M16 10h8v9h-8z" fill="#fff" /></Svg></TrayButton>
        <TrayButton $w={86} aria-label="Volume"><Svg w={34} h={30}><path d="M1 10h5l8-7v24l-8-7H1zM18 11q3 4 0 8M22 7q6 8 0 16M26 3q10 12 0 24" stroke="#fff" strokeWidth="2" /></Svg></TrayButton>
        <TrayButton $w={48} aria-label="Wi-Fi"><Svg w={26} h={28}><circle cx="22" cy="24" r="3" fill="#fff" /><path d="M13 27q0-10 11-11M8 27Q8 11 24 10" stroke="#fff" strokeWidth="2" /><path d="M2 27Q3 4 24 3" stroke="#999" strokeWidth="2" /></Svg></TrayButton>
        <TrayButton $w={74} aria-label="Updates"><Svg w={34} h={34}><path d="M31 16V1L2 6v20l16 3" stroke="#fff" strokeWidth="2" /><path d="M10 15q2-6 9-4M19 7v5h-5M19 17q-2 5-8 4M10 26v-5h5" stroke="#fff" strokeWidth="2" /><circle cx="25" cy="26" r="7" fill="#f90" /></Svg></TrayButton>
        <TrayButton $w={52} aria-label="Pen"><Svg w={34} h={34}><path d="M13 23L26 3q3-3 5 1L18 25l-6 3zM12 17q-9 1-11 8t5 7 8-9M20 26q3 3 6-2t5-2q2-4-1-7" stroke="#fff" strokeWidth="2" /></Svg></TrayButton>
        <TrayButton $w={78} aria-label="Keyboard"><Svg w={48} h={28}><path d="M1 1h46v26H1z" stroke="#fff" strokeWidth="2" /><path d="M6 8h36M6 14h36" stroke="#fff" strokeWidth="2" strokeDasharray="3 2" /><path d="M6 21h5M14 21h20M37 21h5" stroke="#fff" strokeWidth="2" /></Svg></TrayButton>
        <TrayButton $w={44} aria-label="Touchpad"><Svg w={32} h={26}><path d="M1 1h30v24H1zM1 16h30M16 16v9" stroke="#fff" strokeWidth="2" /></Svg></TrayButton>
        <TrayButton $w={98}>ENG</TrayButton>
        <TrayButton $w={98}>5:34 PM</TrayButton>
        <TrayButton $w={112} aria-label="Notifications"><Svg w={34} h={34}><path d="M2 1h30v25H22l-5 6-5-6H2z" stroke="#fff" strokeWidth="2" /></Svg></TrayButton>
        <DesktopEdge />
      </Tray>
    </Taskbar>
  );
}

export default function App() {
  return (
    <>
      <Global />
      <Window>
        <TopBar />
        <RibbonBar />
        <Formula />
        <Sheet />
        <BottomTabs />
        <BottomBar />
      </Window>
    </>
  );
}
